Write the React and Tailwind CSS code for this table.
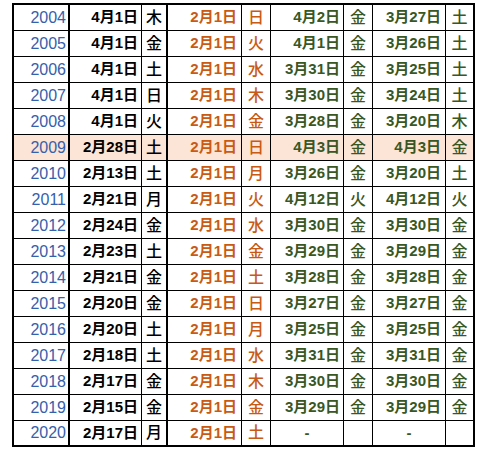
const rows = [
    ['2004', '4月1日', '木', '日', '4月2日', '金', '3月27日', '土'],
    ['2005', '4月1日', '金', '火', '4月1日', '金', '3月26日', '土'],
    ['2006', '4月1日', '土', '水', '3月31日', '金', '3月25日', '土'],
    ['2007', '4月1日', '日', '木', '3月30日', '金', '3月24日', '土'],
    ['2008', '4月1日', '火', '金', '3月28日', '金', '3月20日', '木'],
    ['2009', '2月28日', '土', '日', '4月3日', '金', '4月3日', '金'],
    ['2010', '2月13日', '土', '月', '3月26日', '金', '3月20日', '土'],
    ['2011', '2月21日', '月', '火', '4月12日', '火', '4月12日', '火'],
    ['2012', '2月24日', '金', '水', '3月30日', '金', '3月30日', '金'],
    ['2013', '2月23日', '土', '金', '3月29日', '金', '3月29日', '金'],
    ['2014', '2月21日', '金', '土', '3月28日', '金', '3月28日', '金'],
    ['2015', '2月20日', '金', '日', '3月27日', '金', '3月27日', '金'],
    ['2016', '2月20日', '土', '月', '3月25日', '金', '3月25日', '金'],
    ['2017', '2月18日', '土', '水', '3月31日', '金', '3月31日', '金'],
    ['2018', '2月17日', '金', '木', '3月30日', '金', '3月30日', '金'],
    ['2019', '2月15日', '金', '金', '3月29日', '金', '3月29日', '金'],
    ['2020', '2月17日', '月', '土', '-', '', '-', ''],
]

const jp = "font-['Liberation_Sans','Noto_Sans_CJK_JP',sans-serif]"

export default function App() {
    return (
        <div className="bg-white w-[489px] h-[459px] pt-[3px] pl-[12px]">
            <div className={`w-[463px] border-2 border-black ${jp}`}>
                {rows.map((r, i) => {
                    const last = i === rows.length - 1
                    const hl = r[0] === '2009'
                    return (
                        <div
                            key={i}
                            className={`grid grid-cols-[56px_72px_26px_74px_29px_73px_29px_73px_27px] ${
                                last ? 'h-[24px]' : 'h-[26px] border-b border-black'
                            } ${hl ? 'bg-[#fce4d6]' : ''}`}>
                            <div className="border-r-2 border-black flex items-center justify-end pr-[2px] text-[16px] text-[#3560ac]">
                                {r[0]}
                            </div>
                            <div className="border-r border-black flex items-center justify-end pr-[3px] text-[15px] font-bold text-black">
                                {r[1]}
                            </div>
                            <div className="border-r-2 border-black flex items-center justify-center text-[16px] font-medium text-black">
                                {r[2]}
                            </div>
                            <div className="border-r border-black flex items-center justify-end pr-[4px] text-[15px] font-bold text-[#c85a14]">
                                2月1日
                            </div>
                            <div className="border-r border-black flex items-center justify-center text-[16px] font-medium text-[#c85a14]">
                                {r[3]}
                            </div>
                            <div
                                className={`border-r border-black flex items-center ${
                                    r[4] === '-' ? 'justify-center' : 'justify-end pr-[3px]'
                                } text-[15px] font-bold text-[#385723]`}>
                                {r[4]}
                            </div>
                            <div className="border-r border-black flex items-center justify-center text-[16px] font-medium text-[#385723]">
                                {r[5]}
                            </div>
                            <div
                                className={`border-r border-black flex items-center ${
                                    r[6] === '-' ? 'justify-center' : 'justify-end pr-[4px]'
                                } text-[15px] font-bold text-[#385723]`}>
                                {r[6]}
                            </div>
                            <div className="flex items-center justify-center text-[16px] font-medium text-[#385723]">
                                {r[7]}
                            </div>
                        </div>
                    )
                })}
            </div>
        </div>
    )
}
